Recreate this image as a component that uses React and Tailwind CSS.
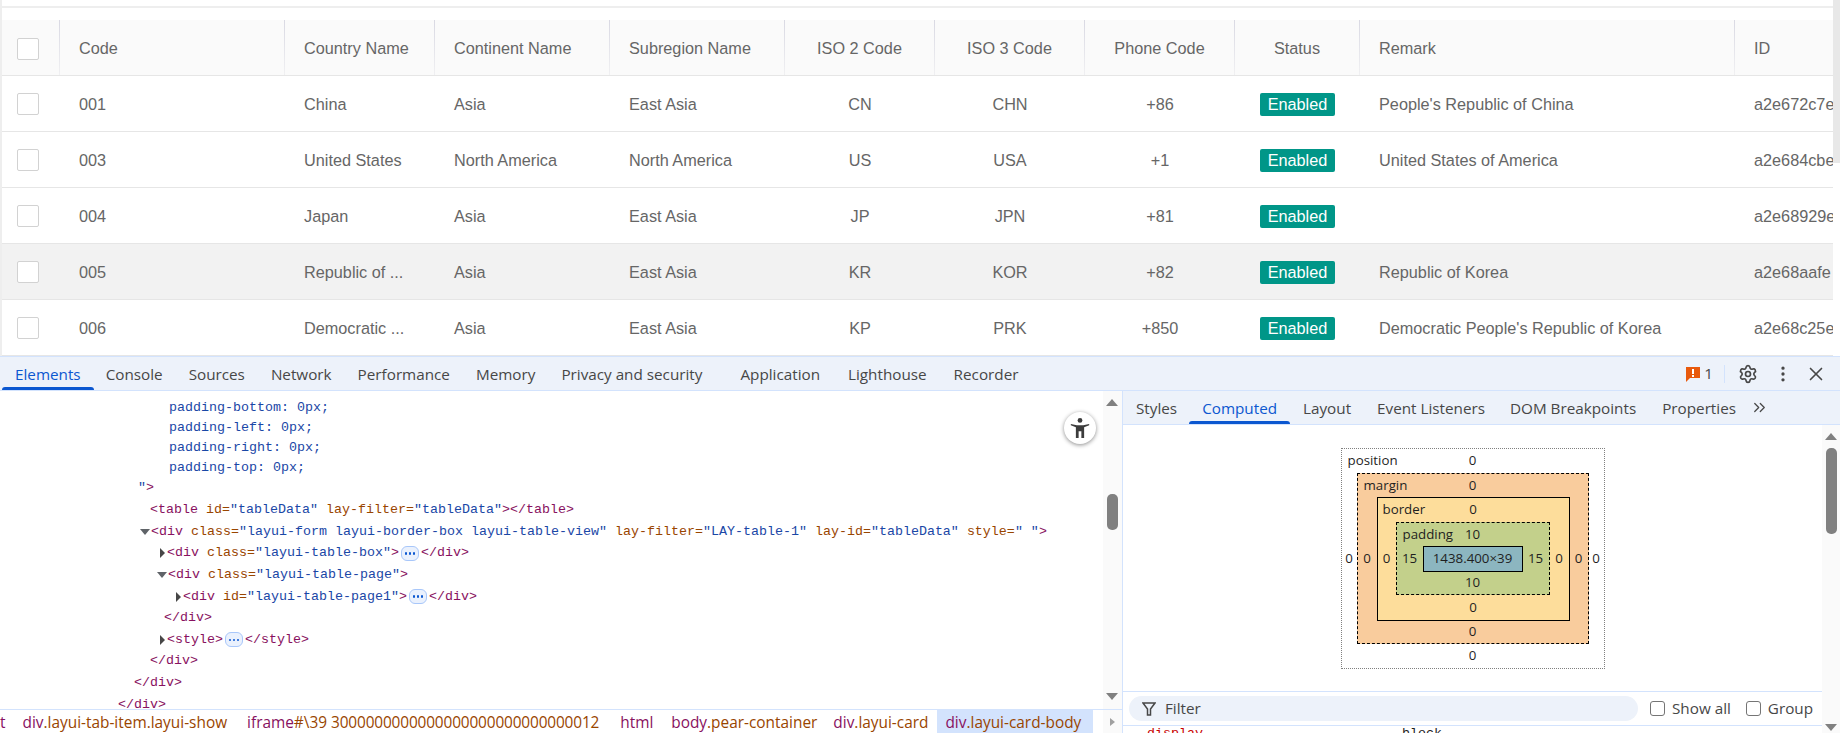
import React from 'react';
import { Settings, MoreVertical, X, ChevronsRight } from 'lucide-react';

const columns = [
  { label: 'Code', width: 'w-[225px]' },
  { label: 'Country Name', width: 'w-[150px]' },
  { label: 'Continent Name', width: 'w-[175px]' },
  { label: 'Subregion Name', width: 'w-[175px]' },
  { label: 'ISO 2 Code', width: 'w-[150px]', center: true },
  { label: 'ISO 3 Code', width: 'w-[150px]', center: true },
  { label: 'Phone Code', width: 'w-[150px]', center: true },
  { label: 'Status', width: 'w-[125px]', center: true },
  { label: 'Remark', width: 'w-[375px]' },
  { label: 'ID', width: 'w-[150px]' },
];

const rows = [
  ['001', 'China', 'Asia', 'East Asia', 'CN', 'CHN', '+86', "People's Republic of China", 'a2e672c7e'],
  ['003', 'United States', 'North America', 'North America', 'US', 'USA', '+1', 'United States of America', 'a2e684cbe'],
  ['004', 'Japan', 'Asia', 'East Asia', 'JP', 'JPN', '+81', '', 'a2e68929e'],
  ['005', 'Republic of ...', 'Asia', 'East Asia', 'KR', 'KOR', '+82', 'Republic of Korea', 'a2e68aafe'],
  ['006', 'Democratic ...', 'Asia', 'East Asia', 'KP', 'PRK', '+850', "Democratic People's Republic of Korea", 'a2e68c25e'],
];

function Checkbox() {
  return <div className="h-[22px] w-[22px] rounded-[2px] border border-[#d2d2d2] bg-white" />;
}

function Cell({ column, children }) {
  return (
    <div className={`flex shrink-0 items-center overflow-hidden whitespace-nowrap pt-[1px] ${column.width} ${column.center ? 'justify-center' : 'pl-[19px]'}`}>
      {children}
    </div>
  );
}

function HeaderCell({ column, last }) {
  return (
    <div className={`flex shrink-0 items-stretch ${column.width}`}>
      <div className={`flex min-w-0 flex-1 items-center whitespace-nowrap pt-[2px] ${column.center ? 'justify-center' : 'pl-[19px]'}`}>
        {column.label}
      </div>
      {!last && <div className="w-px shrink-0 bg-linear-to-b from-[#d9d9e3] to-[#f0f0f2]" />}
    </div>
  );
}

function DataRow({ row, hovered }) {
  const [code, country, continent, subregion, iso2, iso3, phone, remark, id] = row;
  const values = [code, country, continent, subregion, iso2, iso3, phone, null, remark, id];
  return (
    <div className={`flex h-[56px] shrink-0 border-b border-[#e6e6e6] ${hovered ? 'bg-[#f2f2f2]' : 'bg-white'}`}>
      <div className="flex w-[60px] shrink-0 items-center pl-[17px] pt-[1px]">
        <Checkbox />
      </div>
      {columns.map((column, i) => (
        <Cell key={column.label} column={column}>
          {column.label === 'Status' ? (
            <span className="flex h-[23px] w-[75px] items-center justify-center rounded-[2px] bg-[#009688] text-white">Enabled</span>
          ) : (
            values[i]
          )}
        </Cell>
      ))}
    </div>
  );
}

function DataTable() {
  return (
    <div className="relative h-[356px] shrink-0 overflow-hidden bg-white font-['Liberation_Sans',sans-serif] text-[16.25px] text-[#666]">
      <div className="h-[8px] border-b-2 border-[#eeeeee]" />
      <div className="mt-[12px] flex h-[56px] border-b border-[#e6e6e6] bg-[#fafafa]">
        <div className="flex w-[60px] shrink-0 items-stretch">
          <div className="flex flex-1 items-center pl-[17px] pt-[2px]">
            <Checkbox />
          </div>
          <div className="w-px shrink-0 bg-linear-to-b from-[#d9d9e3] to-[#f0f0f2]" />
        </div>
        {columns.map((column, i) => (
          <HeaderCell key={column.label} column={column} last={i === columns.length - 1} />
        ))}
      </div>
      {rows.map((row) => (
        <DataRow key={row[0]} row={row} hovered={row[0] === '005'} />
      ))}
      <div className="absolute inset-y-0 left-0 w-[2px] bg-[#eeeeee]" />
      <div className="absolute right-0 top-0 h-[163px] w-[7px] bg-[#e8e8e8]" />
      <div className="absolute bottom-0 right-0 top-[163px] w-[7px] bg-white" />
    </div>
  );
}

function Tab({ label, active, className = '' }) {
  return (
    <div className={`relative flex h-full items-center px-[13px] pt-[1px] ${active ? 'text-[#0b57d0]' : 'text-[#474747]'} ${className}`}>
      {label}
      {active && <div className="absolute inset-x-0 bottom-0 h-[3px] rounded-t-[3px] bg-[#0b57d0]" />}
    </div>
  );
}

function Toolbar() {
  return (
    <div className="flex h-[34px] shrink-0 items-center border-b border-[#d3e3fd] bg-[#edf2fa] pl-[2px] font-['Open_Sans',sans-serif] text-[15.25px]">
      <Tab label="Elements" active className="-mr-[1px]" />
      <Tab label="Console" />
      <Tab label="Sources" />
      <Tab label="Network" />
      <Tab label="Performance" />
      <Tab label="Memory" />
      <Tab label="Privacy and security" className="mr-[12px]" />
      <Tab label="Application" className="mr-[2px]" />
      <Tab label="Lighthouse" className="mr-[1px]" />
      <Tab label="Recorder" />
      <div className="ml-auto flex items-center text-[#474747]">
        <svg width="16" height="18" viewBox="0 0 16 18">
          <path d="M1 2h14v11H5l-4 4z" fill="#e8590c" />
          <rect x="7" y="4" width="2" height="5" fill="#fff" />
          <rect x="7" y="10" width="2" height="2" fill="#fff" />
        </svg>
        <span className="ml-[3px] mr-[11px]">1</span>
        <div className="mr-[13px] h-[18px] w-px bg-[#d3e3fd]" />
        <Settings size={20} strokeWidth={2} />
        <MoreVertical size={20} className="ml-[15px]" />
        <X size={22} strokeWidth={1.8} className="ml-[12px] mr-[13px]" />
      </div>
    </div>
  );
}

const codeLines = [
  { indent: 169, short: true, clipped: true, text: [['v', 'outline: 0px; padding: 0px;']] },
  { indent: 169, short: true, text: [['v', 'padding-bottom: 0px;']] },
  { indent: 169, short: true, text: [['v', 'padding-left: 0px;']] },
  { indent: 169, short: true, text: [['v', 'padding-right: 0px;']] },
  { indent: 169, short: true, text: [['v', 'padding-top: 0px;']] },
  { indent: 138, short: true, text: [['v', '"'], ['t', '>']] },
  { indent: 150, first: true, text: [['t', '<table '], ['a', 'id='], ['v', '"tableData" '], ['a', 'lay-filter='], ['v', '"tableData"'], ['t', '></table>']] },
  { indent: 150, arrow: 'down', text: [['t', '<div '], ['a', 'class='], ['v', '"layui-form layui-border-box layui-table-view" '], ['a', 'lay-filter='], ['v', '"LAY-table-1" '], ['a', 'lay-id='], ['v', '"tableData" '], ['a', 'style='], ['v', '" "'], ['t', '>']] },
  { indent: 167, arrow: 'right', more: '</div>', text: [['t', '<div '], ['a', 'class='], ['v', '"layui-table-box"'], ['t', '>']] },
  { indent: 167, arrow: 'down', text: [['t', '<div '], ['a', 'class='], ['v', '"layui-table-page"'], ['t', '>']] },
  { indent: 183, arrow: 'right', more: '</div>', text: [['t', '<div '], ['a', 'id='], ['v', '"layui-table-page1"'], ['t', '>']] },
  { indent: 164, text: [['t', '</div>']] },
  { indent: 167, arrow: 'right', more: '</style>', text: [['t', '<style>']] },
  { indent: 150, text: [['t', '</div>']] },
  { indent: 134, text: [['t', '</div>']] },
  { indent: 118, text: [['t', '</div>']] },
];

const tokenColors = { t: 'text-[#881160]', a: 'text-[#994500]', v: 'text-[#1a47a6]' };

function CodeLine({ line }) {
  const height = line.short ? 'h-[20px]' : 'h-[21.6px]';
  const offset = line.clipped ? 'relative -top-[3px] -mt-[20px]' : line.first ? 'mt-[1.5px]' : '';
  return (
    <div className={`flex items-center whitespace-pre ${height} ${offset}`} style={{ paddingLeft: line.indent }}>
      {line.arrow === 'down' && <div className="-ml-[10px] mr-[1px] h-0 w-0 border-x-[5px] border-t-[6px] border-x-transparent border-t-[#5f6368]" />}
      {line.arrow === 'right' && <div className="-ml-[7px] mr-[2px] h-0 w-0 border-y-[5px] border-l-[5px] border-y-transparent border-l-[#474747]" />}
      {line.text.map(([kind, value], i) => (
        <span key={i} className={tokenColors[kind]}>{value}</span>
      ))}
      {line.more && (
        <>
          <span className="mx-[2px] flex h-[15px] w-[18px] items-center justify-center gap-[1.5px] rounded-[6px] border border-[#a8c7fa] bg-[#eaf1fd]">
            <i className="h-[2.5px] w-[2.5px] rounded-full bg-[#0b57d0]" />
            <i className="h-[2.5px] w-[2.5px] rounded-full bg-[#0b57d0]" />
            <i className="h-[2.5px] w-[2.5px] rounded-full bg-[#0b57d0]" />
          </span>
          <span className="text-[#881160]">{line.more}</span>
        </>
      )}
    </div>
  );
}

function ElementsPane() {
  return (
    <div className="flex min-w-0 flex-1 flex-col">
      <div className="flex min-h-0 flex-1">
        <div className="relative min-w-0 flex-1 overflow-hidden bg-white pt-[7px] font-['Liberation_Mono',monospace] text-[13.33px]">
          {codeLines.map((line, i) => (
            <CodeLine key={i} line={line} />
          ))}
          <div className="absolute left-[1064px] top-[21px] flex h-[32px] w-[32px] items-center justify-center rounded-full bg-white shadow-[0_1px_4px_rgba(0,0,0,0.45)]">
            <svg width="22" height="22" viewBox="0 0 24 24" fill="#3c3c3c">
              <circle cx="12" cy="3.8" r="2.6" />
              <path d="M2 7.5l6.5 1.6h7L22 7.5v1.6l-5.5 2.2V23h-3v-7.5h-3V23h-3V11.3L2 9.1z" />
            </svg>
          </div>
        </div>
        <div className="relative w-[19px] shrink-0 bg-[#fafafa]">
          <div className="absolute left-[3px] top-[8px] h-0 w-0 border-x-[6.5px] border-b-[7px] border-x-transparent border-b-[#808080]" />
          <div className="absolute left-[4px] top-[103px] h-[36px] w-[11px] rounded-[5px] bg-[#808080]" />
          <div className="absolute bottom-[9px] left-[3px] h-0 w-0 border-x-[6.5px] border-t-[7px] border-x-transparent border-t-[#808080]" />
        </div>
      </div>
      <div className="flex h-[24px] shrink-0 overflow-hidden whitespace-nowrap border-t border-[#d3e3fd] font-['Open_Sans',sans-serif] text-[15.4px] text-[#881160]">
        <span className="flex items-center pt-[3px]">t</span>
        <span className="ml-[17px] flex items-center pt-[3px]">div<span className="text-[#994500]">.layui-tab-item.layui-show</span></span>
        <span className="ml-[20px] flex items-center pt-[3px]">iframe<span className="text-[#994500]">#\39 </span><span className="ml-[4px] tracking-[-0.15px] text-[#994500]">3000000000000000000000000000012</span></span>
        <span className="ml-[21px] flex items-center pt-[3px]">html</span>
        <span className="ml-[18px] flex items-center pt-[3px]">body<span className="text-[#994500]">.pear-container</span></span>
        <span className="ml-[16px] flex items-center pt-[3px]">div<span className="text-[#994500]">.layui-card</span></span>
        <span className="ml-[9px] flex items-center bg-[#d3e3fd] pl-[8px] pr-[12px] pt-[3px]">div<span className="text-[#994500]">.layui-card-body</span></span>
        <div className="ml-auto flex w-[19px] shrink-0 items-center justify-center bg-[#fafafa]">
          <div className="h-0 w-0 border-y-[4px] border-l-[5px] border-y-transparent border-l-[#a0a0a0]" />
        </div>
      </div>
    </div>
  );
}

function Side({ value, className = '' }) {
  return <div className={`flex shrink-0 items-center justify-center ${className}`}>{value}</div>;
}

function BoxLevel({ label, labelLeft, top, bottom, left, right, topClass, bottomClass, leftClass, rightClass, className = '', children }) {
  return (
    <div className={`flex flex-col ${className}`}>
      <div className={`relative flex shrink-0 items-center justify-center ${topClass}`}>
        <span className={`absolute ${labelLeft}`}>{label}</span>
        {top}
      </div>
      <div className="flex min-h-0 flex-1">
        <Side value={left} className={leftClass} />
        <div className="min-w-0 flex-1">{children}</div>
        <Side value={right} className={rightClass} />
      </div>
      <div className={`flex shrink-0 items-center justify-center ${bottomClass}`}>{bottom}</div>
    </div>
  );
}

function BoxModel() {
  return (
    <BoxLevel
      label="position" labelLeft="left-[6px]" top="0" bottom="0" left="0" right="0"
      topClass="h-[24px]" bottomClass="h-[24px]" leftClass="w-[15px]" rightClass="w-[15px]"
      className="mx-auto mt-[23px] h-[221px] w-[264px] border border-dotted border-[#808080] text-[13.3px] leading-none text-[#1f1f1f]"
    >
      <BoxLevel
        label="margin" labelLeft="left-[6px]" top="0" bottom="0" left="0" right="0"
        topClass="h-[23px]" bottomClass="h-[22px]" leftClass="w-[19px]" rightClass="w-[18px]"
        className="h-full border border-dashed border-black bg-[#f9cc9d]"
      >
        <BoxLevel
          label="border" labelLeft="left-[5px]" top="0" bottom="0" left="0" right="0"
          topClass="h-[24px]" bottomClass="h-[25px]" leftClass="w-[18px]" rightClass="w-[19px]"
          className="h-full border border-black bg-[#fddd9b]"
        >
          <BoxLevel
            label="padding" labelLeft="left-[6px]" top="10" bottom="10" left="15" right="15"
            topClass="h-[23px]" bottomClass="h-[22px]" leftClass="w-[26px]" rightClass="w-[26px]"
            className="h-full border border-dashed border-black bg-[#c3d08b]"
          >
            <div className="flex h-[26px] items-center justify-center border border-black bg-[#8cb6c0]">1438.400×39</div>
          </BoxLevel>
        </BoxLevel>
      </BoxLevel>
    </BoxLevel>
  );
}

function ComputedPane() {
  const tabs = ['Styles', 'Computed', 'Layout', 'Event Listeners', 'DOM Breakpoints', 'Properties'];
  return (
    <div className="flex w-[718px] shrink-0 flex-col border-l border-[#d3e3fd] font-['Open_Sans',sans-serif] text-[15.25px]">
      <div className="flex h-[34px] shrink-0 items-center border-b border-[#d3e3fd] bg-[#edf2fa]">
        {tabs.map((tab) => (
          <Tab key={tab} label={tab} active={tab === 'Computed'} className={tab === 'Styles' ? '-mr-[1px]' : tab === 'Event Listeners' ? '-mr-[1px]' : ''} />
        ))}
        <ChevronsRight size={19} strokeWidth={1.6} className="ml-[1px] text-[#474747]" />
      </div>
      <div className="flex min-h-0 flex-1">
        <div className="flex min-w-0 flex-1 flex-col">
          <div className="min-h-0 flex-1">
            <BoxModel />
          </div>
          <div className="flex h-[35px] shrink-0 items-center border-y border-[#d3e3fd] pl-[6px] pr-[9px] text-[#474747]">
            <div className="flex h-[25px] w-[509px] shrink-0 items-center rounded-full bg-[#edf2fa] pl-[13px]">
              <svg width="14" height="16" viewBox="0 0 14 16" fill="none" stroke="#474747" strokeWidth="1.5">
                <path d="M1 2h12L8.5 8v6h-3V8z" />
              </svg>
              <span className="ml-[9px]">Filter</span>
            </div>
            <div className="ml-[12px] h-[15px] w-[15px] shrink-0 rounded-[3px] border border-[#757575]" />
            <span className="ml-[7px]">Show all</span>
            <div className="ml-auto h-[15px] w-[15px] shrink-0 rounded-[3px] border border-[#757575]" />
            <span className="ml-[7px]">Group</span>
          </div>
          <div className="h-[7px] shrink-0 overflow-hidden pt-[1px] font-['Liberation_Mono',monospace] text-[13.33px] leading-[14px]">
            <span className="ml-[24px] text-[#c80000]">display</span>
            <span className="ml-[199px] text-[#1f1f1f]">block</span>
          </div>
        </div>
        <div className="relative w-[18px] shrink-0 bg-[#fafafa]">
          <div className="absolute left-[3px] top-[8px] h-0 w-0 border-x-[6.5px] border-b-[7px] border-x-transparent border-b-[#808080]" />
          <div className="absolute left-[4px] top-[23px] h-[86px] w-[11px] rounded-[5px] bg-[#808080]" />
          <div className="absolute bottom-[2px] left-[3px] h-0 w-0 border-x-[6.5px] border-t-[7px] border-x-transparent border-t-[#808080]" />
        </div>
      </div>
    </div>
  );
}

export default function App() {
  return (
    <div className="flex h-[733px] w-[1840px] flex-col overflow-hidden bg-white">
      <DataTable />
      <div className="h-px shrink-0 bg-[#d3e3fd]" />
      <Toolbar />
      <div className="flex min-h-0 flex-1">
        <ElementsPane />
        <ComputedPane />
      </div>
    </div>
  );
}
